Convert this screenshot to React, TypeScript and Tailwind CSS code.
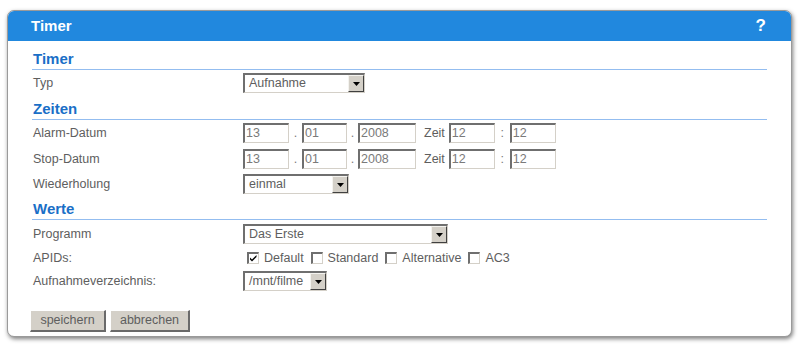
import React from "react";

const font = { fontFamily: '"Liberation Sans", Arial, sans-serif' };

function Heading({ title, className }: { title: string; className: string }) {
  return (
    <div
      className={`h-[20px] border-b border-[#93bdf0] pl-[1px] text-[15px] leading-[17px] font-bold text-[#1a6fc7] ${className}`}
    >
      {title}
    </div>
  );
}

function Row({
  label,
  className,
  children,
}: {
  label: string;
  className: string;
  children: React.ReactNode;
}) {
  return (
    <div className={`flex h-[20px] items-center ${className}`}>
      <div className="w-[211px] pl-[1px] text-[#5e5e5e]">{label}</div>
      <div className="flex items-center">{children}</div>
    </div>
  );
}

function Field({ value, w }: { value: string; w: string }) {
  return (
    <div
      className={`${w} h-[20px] border-t-2 border-l-2 border-b border-r border-t-[#6f6f6f] border-l-[#6f6f6f] border-b-[#d4d0c8] border-r-[#d4d0c8] bg-white pl-[1px] leading-[17px] text-[#7a7a7a]`}
    >
      {value}
    </div>
  );
}

function Select({ value, w }: { value: string; w: string }) {
  return (
    <div
      className={`${w} flex h-[20px] items-center border-t-2 border-l-2 border-b border-r border-t-[#6f6f6f] border-l-[#6f6f6f] border-b-[#d4d0c8] border-r-[#d4d0c8] bg-white`}
    >
      <div className="flex-1 truncate pl-[4px] text-[#5e5e5e]">{value}</div>
      <div className="flex h-[17px] w-[16px] items-center justify-center border-t border-l border-b border-r border-t-[#f4f3ef] border-l-[#f4f3ef] border-b-[#404040] border-r-[#404040] bg-[#d4d0c8]">
        <svg width="7" height="4" viewBox="0 0 7 4">
          <path d="M0 0h7L3.5 4z" fill="#000" />
        </svg>
      </div>
    </div>
  );
}

function Check({ label, checked, className }: { label: string; checked?: boolean; className: string }) {
  return (
    <div className={`flex items-center ${className}`}>
      <div className="h-[12px] w-[12px] border-t-2 border-l-2 border-b border-r border-t-[#6f6f6f] border-l-[#6f6f6f] border-b-[#d4d0c8] border-r-[#d4d0c8] bg-white">
        {checked && (
          <svg width="9" height="9" viewBox="0 0 9 9" className="block">
            <path d="M1 3.5l2 2 4.5-4.5v2L3 7.5 1 5.5z" fill="#000" />
          </svg>
        )}
      </div>
      <span className="ml-[5px] text-[#5e5e5e]">{label}</span>
    </div>
  );
}

function Button({ label, w }: { label: string; w: string }) {
  return (
    <div
      className={`${w} flex h-[22px] items-center justify-center border-t border-l border-b-2 border-r-2 border-t-[#fff] border-l-[#fff] border-b-[#6a6a6a] border-r-[#6a6a6a] bg-[#d4d0c8] text-[#5e5e5e]`}
    >
      {label}
    </div>
  );
}

export default function App() {
  return (
    <div className="h-[348px] w-[800px] bg-white pt-[10px] text-[12.5px]" style={font}>
      <div className="ml-[7px] w-[785px] overflow-hidden rounded-[7px] border border-[#9a9a9a] bg-white shadow-[1px_2px_4px_rgba(0,0,0,0.5)]">
        <div className="flex h-[30px] items-center justify-between bg-[#2188de] pl-[23px] pr-[25px] text-[15px] font-bold text-white">
          <span>Timer</span>
          <span className="text-[17px]">?</span>
        </div>
        <div className="px-[24px] pb-[4px]">
          <Heading title="Timer" className="mt-[9px]" />
          <Row label="Typ" className="mt-[3px]">
            <Select value="Aufnahme" w="w-[122px]" />
          </Row>

          <Heading title="Zeiten" className="mt-[7px]" />
          {["Alarm-Datum", "Stop-Datum"].map((l, i) => (
            <Row key={l} label={l} className={i === 0 ? "mt-[3px]" : "mt-[6px]"}>
              <Field value="13" w="w-[46px]" />
              <span className="w-[13px] text-center text-[#7a7a7a]">.</span>
              <Field value="01" w="w-[45px]" />
              <span className="w-[11px] text-center text-[#7a7a7a]">.</span>
              <Field value="2008" w="w-[58px]" />
              <span className="ml-[8px] mr-[4px] text-[#5e5e5e]">Zeit</span>
              <Field value="12" w="w-[46px]" />
              <span className="w-[15px] text-center text-[#7a7a7a]">:</span>
              <Field value="12" w="w-[46px]" />
            </Row>
          ))}
          <Row label="Wiederholung" className="mt-[5px]">
            <Select value="einmal" w="w-[106px]" />
          </Row>

          <Heading title="Werte" className="mt-[6px]" />
          <Row label="Programm" className="mt-[4px]">
            <Select value="Das Erste" w="w-[205px]" />
          </Row>
          <Row label="APIDs:" className="mt-[4px]">
            <Check label="Default" checked className="ml-[4px]" />
            <Check label="Standard" className="ml-[7px]" />
            <Check label="Alternative" className="ml-[7px]" />
            <Check label="AC3" className="ml-[7px]" />
          </Row>
          <Row label="Aufnahmeverzeichnis:" className="mt-[3px]">
            <Select value="/mnt/filme" w="w-[84px]" />
          </Row>

          <div className="-ml-[2px] mt-[19px] flex gap-[4px]">
            <Button label="speichern" w="w-[76px]" />
            <Button label="abbrechen" w="w-[80px]" />
          </div>
        </div>
      </div>
    </div>
  );
}
